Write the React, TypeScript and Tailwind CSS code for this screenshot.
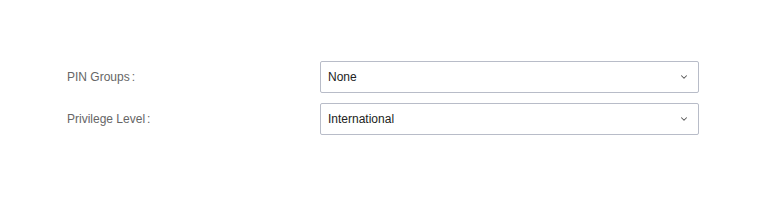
import { ChevronDown } from "lucide-react";

const fields = [
  { label: "PIN Groups", value: "None" },
  { label: "Privilege Level", value: "International" },
];

export default function App() {
  return (
    <div
      className="w-[764px] h-[206px] bg-white pt-[61px] pl-[67px]"
      style={{ fontFamily: '"Liberation Sans", Arial, sans-serif' }}
    >
      <div className="flex flex-col gap-[10px]">
        {fields.map((f) => (
          <div key={f.label} className="flex items-center">
            <div className="w-[253px] text-[12px] text-[#666666]">
              {f.label}
              <span className="ml-[2px]">:</span>
            </div>
            <div className="flex h-[32px] w-[379px] items-center justify-between rounded-[2px] border border-[#b8bcc8] pl-[7px] pr-[9px] text-[12px] text-[#222222]">
              <span>{f.value}</span>
              <ChevronDown className="h-[10px] w-[10px] text-[#555555]" strokeWidth={2.5} />
            </div>
          </div>
        ))}
      </div>
    </div>
  );
}
